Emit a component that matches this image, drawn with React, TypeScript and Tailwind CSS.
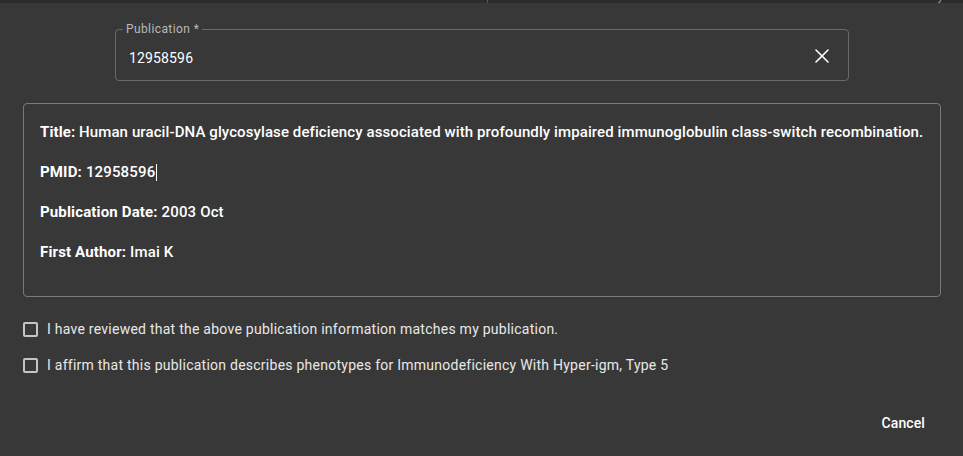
import { X } from "lucide-react";

const font = { fontFamily: "Roboto, 'Liberation Sans', sans-serif" };

function Field({ label, value }: { label: string; value: string }) {
  return (
    <p className="mb-4 whitespace-nowrap text-[15px] leading-6 tracking-[0.15px] text-white">
      <span className="font-bold">{label}:</span> <span className="font-medium">{value}</span>
    </p>
  );
}

function Check({ children }: { children: string }) {
  return (
    <label className="flex h-9 items-center gap-[9px] pl-[23px] text-[14px] tracking-[0.25px] text-[#e8e8e8]">
      <span className="box-border h-[15px] w-[15px] rounded-[2px] border-2 border-[#c4c4c4]" />
      {children}
    </label>
  );
}

export default function App() {
  return (
    <div className="flex h-[456px] w-[963px] flex-col overflow-hidden bg-[#383838]" style={font}>
      {/* page behind the dialog, only its bottom edge shows */}
      <div className="relative flex h-[3px] overflow-hidden bg-[#2b2b2b] text-[13px] leading-4 text-[#9a9a9a]">
        <span className="-mt-[12px] ml-0 whitespace-nowrap">Conditions for this disease</span>
        <span className="absolute left-[487px] top-0 h-[3px] w-px bg-[#555]" />
        <span className="absolute left-[792px] -top-[12px] whitespace-nowrap">Medical Genetic Summary</span>
      </div>

      <div className="pl-[115px] pr-[114px] pt-[26px]">
        <div className="relative flex h-[52px] items-center rounded-[4px] border border-[#6a6a6a] pl-[13px] pr-[14px]">
          <span className="absolute -top-[8px] left-[7px] bg-[#383838] px-[3px] text-[12px] leading-[14px] tracking-[0.4px] text-[#b8b8b8]">
            Publication *
          </span>
          <span className="mt-[6px] flex-1 text-[14px] tracking-[0.15px] text-white">12958596</span>
          <X size={24} strokeWidth={1.6} className="mt-[2px] text-white" />
        </div>
      </div>

      <div className="ml-[23px] mr-[22px] mt-[22px] rounded-[4px] border border-[#7a7a7a] px-4 pb-4 pt-4">
        <p className="mb-4 whitespace-nowrap text-[15px] leading-6 tracking-[0.1px] text-white">
          <span className="font-bold">Title:</span>{" "}
          <span className="font-medium">
            Human uracil-DNA glycosylase deficiency associated with profoundly impaired immunoglobulin class-switch recombination.
          </span>
        </p>
        <p className="mb-4 flex items-center text-[15px] leading-6 tracking-[0.15px] text-white">
          <span className="font-bold">PMID:</span>
          <span className="ml-1 font-medium">12958596</span>
          <span className="ml-px h-[17px] w-px bg-white" />
        </p>
        <Field label="Publication Date" value="2003 Oct" />
        <Field label="First Author" value="Imai K" />
      </div>

      <div className="mt-[14px] flex flex-col">
        <Check>I have reviewed that the above publication information matches my publication.</Check>
        <Check>I affirm that this publication describes phenotypes for Immunodeficiency With Hyper-igm, Type 5</Check>
      </div>

      <div className="mt-auto flex justify-end px-[30px] pb-[16px]">
        <button className="rounded px-2 py-1.5 text-[14px] font-medium tracking-[0.1px] text-white">Cancel</button>
      </div>
    </div>
  );
}
